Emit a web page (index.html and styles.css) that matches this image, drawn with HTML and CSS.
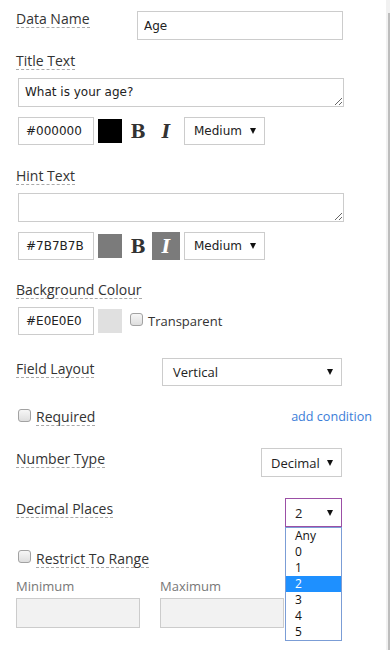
FILE: index.html
```html
<!DOCTYPE html>
<html lang="en">
<head>
  <meta charset="UTF-8" />
  <meta name="viewport" content="width=device-width, initial-scale=1.0"/>
  <title>Field Properties</title>
  <link rel="stylesheet" href="styles.css">
</head>
<body>
  <div class="page">
    <div class="form">
      <div class="row-name">
        <span class="lbl">Data Name</span>
        <input class="txt name-input" type="text" value="Age">
      </div>

      <div class="label-row"><span class="lbl">Title Text</span></div>
      <textarea class="area">What is your age?</textarea>
      <div class="style-row">
        <input class="txt hex" type="text" value="#000000">
        <span class="swatch swatch-black"></span>
        <span class="fmt fmt-b">B</span>
        <span class="fmt fmt-i">I</span>
        <div class="sel sel-size"><span>Medium</span><i class="arrow"></i></div>
      </div>

      <div class="label-row gap-lg"><span class="lbl">Hint Text</span></div>
      <textarea class="area"></textarea>
      <div class="style-row">
        <input class="txt hex" type="text" value="#7B7B7B">
        <span class="swatch swatch-grey"></span>
        <span class="fmt fmt-b">B</span>
        <span class="fmt fmt-i active">I</span>
        <div class="sel sel-size"><span>Medium</span><i class="arrow"></i></div>
      </div>

      <div class="label-row gap-bg"><span class="lbl">Background Colour</span></div>
      <div class="style-row">
        <input class="txt hex" type="text" value="#E0E0E0">
        <span class="swatch swatch-light"></span>
        <span class="check check-inline"></span>
        <span class="check-text">Transparent</span>
      </div>

      <div class="line-row row-layout">
        <span class="lbl">Field Layout</span>
        <div class="sel sel-layout"><span>Vertical</span><i class="arrow"></i></div>
      </div>

      <div class="line-row row-required">
        <span class="check"></span>
        <span class="lbl">Required</span>
        <a class="cond-link">add condition</a>
      </div>

      <div class="line-row row-number">
        <span class="lbl">Number Type</span>
        <div class="sel sel-number"><span>Decimal</span><i class="arrow"></i></div>
      </div>

      <div class="line-row row-decimal">
        <span class="lbl">Decimal Places</span>
        <div class="sel sel-decimal">
          <span>2</span><i class="arrow"></i>
          <ul class="dropdown">
            <li>Any</li>
            <li>0</li>
            <li>1</li>
            <li class="picked">2</li>
            <li>3</li>
            <li>4</li>
            <li>5</li>
          </ul>
        </div>
      </div>

      <div class="line-row row-range">
        <span class="check"></span>
        <span class="lbl">Restrict To Range</span>
      </div>

      <div class="range">
        <div class="range-col">
          <div class="range-lbl">Minimum</div>
          <div class="range-input"></div>
        </div>
        <div class="range-col">
          <div class="range-lbl">Maximum</div>
          <div class="range-input"></div>
        </div>
      </div>
    </div>

    <div class="scrollbar"><div class="scrollbar-thumb"></div></div>
  </div>
</body>
</html>
```

FILE: styles.css
```css
* {
  box-sizing: border-box;
}

body {
  margin: 0;
  font-family: "Open Sans", "Liberation Sans", sans-serif;
  color: #333;
  background: #fff;
}

.page {
  display: flex;
  height: 650px;
  overflow: hidden;
}

.form {
  flex: 1;
  padding: 10px 42px 0 16px;
}

.scrollbar {
  width: 4px;
  background: #f1f1f1;
}
.scrollbar-thumb {
  margin: 13px 0 0 2px;
  width: 2px;
  height: 637px;
  background: #bdbdbd;
}

.lbl {
  display: inline-block;
  font-size: 14px;
  line-height: 17px;
  border-bottom: 1px dashed #aaa;
  color: #333;
}

.txt {
  border: 1px solid #ccc;
  font-family: "DejaVu Sans", Verdana, sans-serif;
  font-size: 12px;
  color: #222;
  background: #fff;
  outline: none;
}

.row-name {
  display: flex;
  align-items: flex-start;
  justify-content: space-between;
}
.name-input {
  margin: 1px 1px 0 0;
  width: 206px;
  height: 29px;
  padding: 0 6px;
}

.label-row {
  display: flex;
  margin-top: 12px;
}
.label-row.gap-lg {
  margin-top: 22px;
}
.label-row.gap-bg {
  margin-top: 21px;
}

.area {
  display: block;
  margin: 8px 0 0 2px;
  width: 326px;
  height: 29px;
  padding: 6px 6px;
  border: 1px solid #ccc;
  font-family: "DejaVu Sans", Verdana, sans-serif;
  font-size: 12px;
  color: #222;
  outline: none;
}

.style-row {
  display: flex;
  align-items: center;
  height: 28px;
  margin: 10px 0 0 2px;
}
.label-row + .style-row {
  margin-top: 8px;
}

.hex {
  width: 76px;
  height: 28px;
  padding: 0 7px;
}

.swatch {
  width: 24px;
  height: 24px;
  margin-left: 4px;
}
.swatch-black { background: #000; }
.swatch-grey { background: #7b7b7b; }
.swatch-light { background: #e0e0e0; }

.fmt {
  display: flex;
  align-items: center;
  justify-content: center;
  width: 28px;
  height: 28px;
  font-family: "DejaVu Serif", "Liberation Serif", serif;
  font-weight: bold;
  font-size: 18px;
  color: #333;
}
.fmt-b {
  margin-left: 2px;
}
.fmt-i {
  font-style: italic;
}
.fmt-i.active {
  background: #7b7b7b;
  color: #fff;
}

.sel {
  display: flex;
  align-items: center;
  justify-content: space-between;
  border: 1px solid #ccc;
  background: #fff;
  padding: 0 8px 0 9px;
  font-size: 13px;
  color: #222;
}
.arrow {
  width: 0;
  height: 0;
  border-left: 3px solid transparent;
  border-right: 3px solid transparent;
  border-top: 6px solid #111;
}
.sel-size {
  margin-left: 4px;
  width: 81px;
  height: 28px;
  font-family: "DejaVu Sans", Verdana, sans-serif;
  font-size: 12px;
}

.check {
  display: inline-block;
  width: 13px;
  height: 13px;
  border: 1px solid #a2a2a2;
  border-radius: 3px;
  background: linear-gradient(#f6f6f6, #dedede);
}
.check-inline {
  margin: -3px 0 0 8px;
}
.check-text {
  margin-left: 5px;
  font-size: 13px;
  color: #333;
}

.line-row {
  display: flex;
  align-items: flex-start;
}
.row-layout {
  margin-top: 23px;
  justify-content: space-between;
}
.row-layout .lbl,
.row-number .lbl,
.row-decimal .lbl {
  margin-top: 2px;
}
.sel-layout {
  width: 180px;
  height: 28px;
  margin-right: 2px;
  padding-left: 10px;
}

.row-required {
  margin: 22px -28px 0 0;
}
.row-required .check {
  margin: 1px 5px 0 2px;
}
.cond-link {
  margin-left: auto;
  font-size: 12.6px;
  line-height: 17px;
  color: #3b7dd8;
  cursor: pointer;
}

.row-number {
  margin-top: 22px;
  justify-content: space-between;
}
.sel-number {
  width: 81px;
  height: 29px;
  margin-right: 2px;
}

.row-decimal {
  margin-top: 21px;
  justify-content: space-between;
}
.sel-decimal {
  position: relative;
  width: 57px;
  height: 29px;
  margin-right: 2px;
  border-color: #9b4fa6;
}

.dropdown {
  position: absolute;
  top: 28px;
  left: -1px;
  right: -1px;
  margin: 0;
  padding: 0;
  list-style: none;
  border: 1px solid #7b9dd6;
  background: #fff;
  font-size: 12px;
}
.dropdown li {
  height: 16px;
  line-height: 16px;
  padding-left: 9px;
  color: #111;
}
.dropdown li.picked {
  background: #1e90ff;
  color: #fff;
}

.row-range {
  margin-top: 23px;
}
.row-range .check {
  margin: 0 5px 0 2px;
}
.row-range .lbl {
  margin-top: 0;
}

.range {
  display: flex;
  gap: 20px;
  margin-top: 10px;
}
.range-col {
  width: 124px;
}
.range-lbl {
  font-size: 13px;
  line-height: 17px;
  color: #777;
}
.range-input {
  margin-top: 3px;
  height: 30px;
  border: 1px solid #ccc;
  background: #f2f2f2;
}
```
